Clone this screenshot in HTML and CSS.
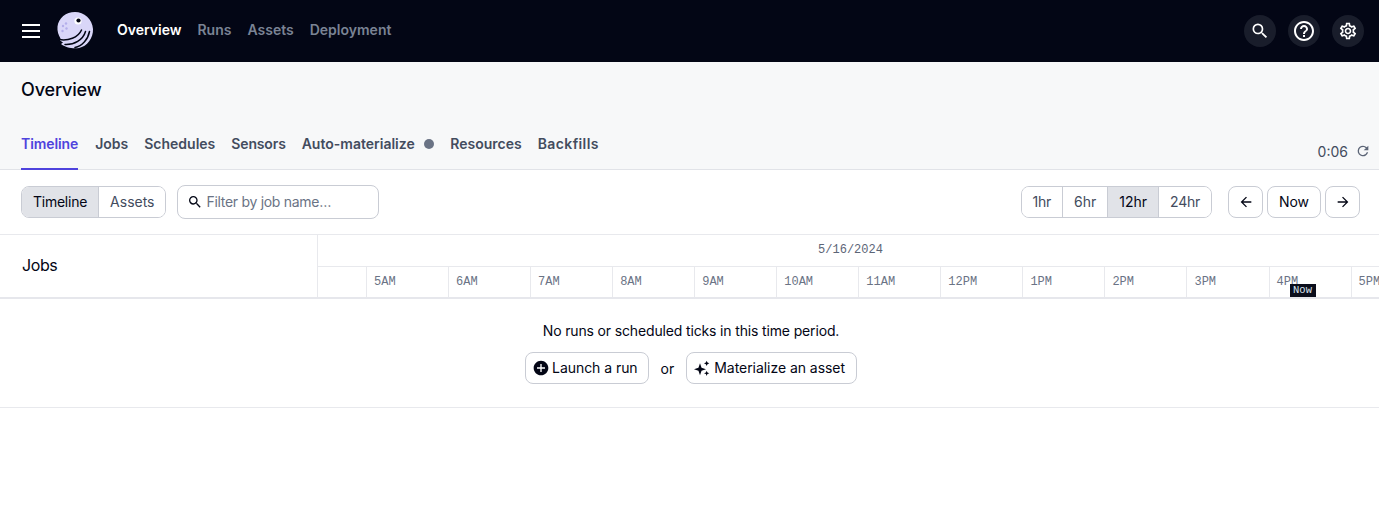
FILE: index.html
```html
<!DOCTYPE html>
<html lang="en">
<head>
    <meta charset="UTF-8">
    <meta name="viewport" content="width=device-width, initial-scale=1.0">
    <title>Overview</title>
    <link rel="stylesheet" href="styles.css">
</head>
<body>
    <header class="topnav">
        <svg class="menu-icon" width="18" height="14" viewBox="0 0 18 14"><path d="M0 1h18M0 7h18M0 13h18" stroke="#fff" stroke-width="2"/></svg>
        <svg class="logo" width="38" height="38" viewBox="0 0 38 38">
            <path d="M19 1C28 1 36.500 8 37 18C37.500 27 31 35.500 23 37C17 38 9 36.500 5 33L7 31.500L4 29.500L4.500 27.500C2.500 24 1 20 1.500 15.500C2.500 7 10 1 19 1Z" fill="#d9d6f8"/>
            <path d="M3 28.500C12 30 22 27 25.500 19M9 33.500C18 34 27 29 29.500 20.500M19 36.500C26 35 32 28.500 33.500 20.500" fill="none" stroke="#030615" stroke-width="1.500" stroke-linecap="round"/>
            <circle cx="22" cy="10" r="3.600" fill="#fff"/>
            <circle cx="22.500" cy="9.500" r="2.100" fill="#030615"/>
            <circle cx="7" cy="15" r="1.200" fill="#b3aeea"/>
            <circle cx="10.500" cy="17.500" r="1.200" fill="#b3aeea"/>
            <circle cx="6.500" cy="20" r="1.200" fill="#b3aeea"/>
            <circle cx="10" cy="12.500" r="1.200" fill="#b3aeea"/>
        </svg>
        <nav class="topnav-links">
            <a class="topnav-link active">Overview</a>
            <a class="topnav-link">Runs</a>
            <a class="topnav-link">Assets</a>
            <a class="topnav-link">Deployment</a>
        </nav>
        <div class="topnav-right">
            <div class="round-btn">
                <svg width="20" height="20" viewBox="0 0 24 24" fill="#fff"><path d="M15.500 14h-.79l-.28-.27A6.470 6.470 0 0 0 16 9.500 6.500 6.500 0 1 0 9.500 16c1.610 0 3.090-.59 4.230-1.570l.27.28v.79l5 4.990L20.490 19l-4.990-5zm-6 0C7.010 14 5 11.990 5 9.500S7.010 5 9.500 5 14 7.010 14 9.500 11.990 14 9.500 14z"/></svg>
            </div>
            <div class="round-btn">
                <svg width="24" height="24" viewBox="0 0 24 24" fill="#fff"><path d="M11 18h2v-2h-2v2zm1-16C6.480 2 2 6.480 2 12s4.480 10 10 10 10-4.480 10-10S17.520 2 12 2zm0 18c-4.410 0-8-3.590-8-8s3.590-8 8-8 8 3.590 8 8-3.590 8-8 8zm0-14c-2.210 0-4 1.790-4 4h2c0-1.100.9-2 2-2s2 .9 2 2c0 2-3 1.750-3 5h2c0-2.250 3-2.500 3-5 0-2.210-1.790-4-4-4z"/></svg>
            </div>
            <div class="round-btn">
                <svg width="20" height="20" viewBox="0 0 24 24" fill="#fff"><path d="M19.430 12.980c.04-.32.070-.64.070-.98 0-.34-.03-.66-.07-.98l2.110-1.650c.19-.15.240-.42.120-.64l-2-3.460c-.09-.16-.26-.25-.44-.25-.06 0-.12.010-.17.030l-2.490 1c-.52-.4-1.080-.73-1.690-.98l-.38-2.650C14.460 2.180 14.250 2 14 2h-4c-.25 0-.46.180-.49.420l-.38 2.650c-.61.250-1.170.590-1.690.980l-2.490-1c-.06-.02-.12-.03-.18-.03-.17 0-.34.090-.43.250l-2 3.460c-.13.220-.07.490.12.640l2.110 1.650c-.04.320-.07.650-.07.980 0 .33.030.66.070.98l-2.110 1.650c-.19.150-.24.420-.12.640l2 3.460c.09.160.26.250.44.250.06 0 .12-.01.170-.03l2.490-1c.52.400 1.080.730 1.690.980l.38 2.650c.03.240.24.420.49.420h4c.25 0 .46-.18.490-.42l.38-2.650c.61-.25 1.170-.59 1.690-.98l2.490 1c.06.020.12.030.18.030.17 0 .34-.09.43-.25l2-3.460c.12-.22.070-.49-.12-.64l-2.110-1.650zm-1.980-1.710c.04.310.05.520.05.730 0 .21-.02.430-.05.730l-.14 1.130.89.700 1.080.840-.7 1.210-1.270-.51-1.040-.42-.9.680c-.43.320-.84.560-1.250.730l-1.060.430-.16 1.130-.2 1.350h-1.400l-.19-1.350-.16-1.130-1.060-.43c-.43-.18-.83-.41-1.230-.71l-.91-.7-1.060.43-1.270.51-.7-1.210 1.080-.84.890-.7-.14-1.130c-.03-.31-.05-.54-.05-.74s.02-.43.050-.73l.14-1.130-.89-.7-1.080-.84.7-1.210 1.270.51 1.040.42.9-.68c.43-.32.840-.56 1.250-.73l1.060-.43.160-1.130.2-1.350h1.390l.19 1.350.16 1.130 1.060.43c.43.180.83.410 1.230.71l.91.700 1.060-.43 1.270-.51.7 1.210-1.070.85-.89.700.14 1.130zM12 8c-2.210 0-4 1.790-4 4s1.790 4 4 4 4-1.790 4-4-1.790-4-4-4zm0 6c-1.100 0-2-.9-2-2s.9-2 2-2 2 .9 2 2-.9 2-2 2z"/></svg>
            </div>
        </div>
    </header>

    <section class="page-head">
        <h1 class="page-title">Overview</h1>
        <div class="tabs-row">
            <div class="tabs">
                <a class="tab active">Timeline</a>
                <a class="tab">Jobs</a>
                <a class="tab">Schedules</a>
                <a class="tab tab-tight">Sensors</a>
                <a class="tab">Auto-materialize <span class="tab-dot"></span></a>
                <a class="tab">Resources</a>
                <a class="tab tab-wide">Backfills</a>
            </div>
            <div class="refresh">
                <span>0:06</span>
                <svg width="16" height="16" viewBox="0 0 24 24" fill="#5c6577"><path d="M17.650 6.350A7.960 7.960 0 0 0 12 4a8 8 0 1 0 7.730 10h-2.080A6 6 0 1 1 12 6c1.660 0 3.140.69 4.220 1.780L13 11h7V4l-2.350 2.350z"/></svg>
            </div>
        </div>
    </section>

    <section class="toolbar">
        <div class="toolbar-left">
            <div class="btn-group">
                <button class="seg selected seg-tight">Timeline</button>
                <button class="seg seg-assets">Assets</button>
            </div>
            <div class="filter">
                <svg width="16" height="16" viewBox="0 0 24 24" fill="#030615"><path d="M15.500 14h-.79l-.28-.27A6.470 6.470 0 0 0 16 9.500 6.500 6.500 0 1 0 9.500 16c1.610 0 3.090-.59 4.230-1.570l.27.28v.79l5 4.990L20.490 19l-4.990-5zm-6 0C7.010 14 5 11.990 5 9.500S7.010 5 9.500 5 14 7.010 14 9.500 11.990 14 9.500 14z"/></svg>
                <span>Filter by job name…</span>
            </div>
        </div>
        <div class="toolbar-right">
            <div class="btn-group">
                <button class="seg seg-tight">1hr</button>
                <button class="seg">6hr</button>
                <button class="seg selected">12hr</button>
                <button class="seg seg-tight">24hr</button>
            </div>
            <div class="pager">
                <button class="btn icon-btn"><svg width="16" height="16" viewBox="0 0 24 24" fill="#030615"><path d="M20 11H7.830l5.590-5.590L12 4l-8 8 8 8 1.410-1.410L7.830 13H20v-2z"/></svg></button>
                <button class="btn now-btn">Now</button>
                <button class="btn icon-btn"><svg width="16" height="16" viewBox="0 0 24 24" fill="#030615"><path d="M12 4l-1.410 1.410L16.170 11H4v2h12.170l-5.580 5.590L12 20l8-8z"/></svg></button>
            </div>
        </div>
    </section>

    <section class="timeline-head">
        <div class="jobs-col">Jobs</div>
        <div class="time-col">
            <div class="date-row">5/16/2024</div>
            <div class="ticks">
                <div class="tick-spacer"></div>
                <div class="tick">5AM</div>
                <div class="tick">6AM</div>
                <div class="tick">7AM</div>
                <div class="tick">8AM</div>
                <div class="tick">9AM</div>
                <div class="tick">10AM</div>
                <div class="tick">11AM</div>
                <div class="tick">12PM</div>
                <div class="tick">1PM</div>
                <div class="tick">2PM</div>
                <div class="tick">3PM</div>
                <div class="tick">4PM<span class="now-tag">Now</span></div>
                <div class="tick">5PM</div>
            </div>
        </div>
    </section>

    <section class="empty">
        <p class="empty-text">No runs or scheduled ticks in this time period.</p>
        <div class="empty-actions">
            <button class="btn action-btn launch-btn">
                <svg width="16" height="16" viewBox="0 0 24 24" fill="#030615"><path d="M12 1C5.930 1 1 5.930 1 12s4.930 11 11 11 11-4.930 11-11S18.070 1 12 1zm6 12h-5v5h-2v-5H6v-2h5V6h2v5h5v2z"/></svg>
                Launch a run
            </button>
            <span>or</span>
            <button class="btn action-btn">
                <svg width="16" height="16" viewBox="0 0 24 24" fill="#030615"><path d="M9 5l2.300 6.700L18 14l-6.700 2.300L9 23l-2.300-6.700L0 14l6.700-2.300zM19 1l1.200 2.800L23 5l-2.800 1.200L19 9l-1.200-2.800L15 5l2.800-1.200zM19 16l1.100 2.900L23 20l-2.900 1.100L19 24l-1.100-2.900L15 20l2.900-1.100z"/></svg>
                Materialize an asset
            </button>
        </div>
    </section>
</body>
</html>
```

FILE: styles.css
```css
* {
    box-sizing: border-box;
}
body {
    margin: 0;
    font-family: Inter, "Noto Sans", sans-serif;
    font-size: 14px;
    color: #030615;
    background-color: #fff;
}
button {
    font-family: inherit;
    font-size: 14px;
    color: inherit;
    cursor: pointer;
}

/* top bar */
.topnav {
    height: 62px;
    background-color: #030615;
    display: flex;
    align-items: center;
    padding: 0 15px 0 22px;
}
.menu-icon {
    margin-right: 16px;
}
.logo {
    margin: -2px 23px 0 0;
}
.topnav-links {
    display: flex;
    gap: 16px;
    padding-bottom: 4px;
}
.topnav-link {
    font-size: 14px;
    font-weight: 600;
    color: #7a8394;
}
.topnav-link.active {
    color: #fff;
}
.topnav-right {
    margin-left: auto;
    display: flex;
    gap: 12px;
}
.round-btn {
    width: 32px;
    height: 32px;
    border-radius: 50%;
    background-color: #191d2b;
    display: flex;
    align-items: center;
    justify-content: center;
}

/* page header and tabs */
.page-head {
    height: 108px;
    background-color: #f7f8f9;
    border-bottom: 1px solid #e1e3e8;
    padding: 0 8px 0 21px;
    display: flex;
    flex-direction: column;
    justify-content: space-between;
}
.page-title {
    margin: 16px 0 0;
    font-size: 18px;
    line-height: 24px;
    font-weight: 500;
    letter-spacing: -0.15px;
}
.tabs-row {
    display: flex;
    justify-content: space-between;
    align-items: flex-end;
}
.tabs {
    display: flex;
    gap: 16px;
}
.tab {
    height: 39px;
    padding-top: 3px;
    margin-bottom: -1px;
    font-size: 14px;
    line-height: 20px;
    font-weight: 600;
    color: #434c5e;
    border-bottom: 2px solid transparent;
    display: flex;
    align-items: flex-start;
    white-space: pre;
}
.tab.active {
    color: #4f43dd;
    border-bottom-color: #4f43dd;
    margin-right: 1px;
    letter-spacing: -0.1px;
}
.tab-tight {
    letter-spacing: -0.15px;
}
.tab-wide {
    letter-spacing: 0.4px;
}
.tab-dot {
    width: 10px;
    height: 10px;
    margin: 5px 0 0 6px;
    border-radius: 50%;
    background-color: #6a7385;
}
.refresh {
    display: flex;
    align-items: center;
    gap: 7px;
    height: 36px;
    font-size: 14px;
    color: #434c5e;
}

/* toolbar */
.toolbar {
    height: 64px;
    padding: 15px 21px 0;
    display: flex;
    justify-content: space-between;
}
.toolbar-left, .toolbar-right, .pager {
    display: flex;
    align-items: flex-start;
}
.toolbar-left {
    gap: 11px;
}
.toolbar-right {
    gap: 16px;
    margin-right: -2px;
}
.pager {
    gap: 4px;
}
.btn-group {
    display: flex;
    height: 32px;
    margin-top: 1px;
    border: 1px solid #c9ccd4;
    border-radius: 8px;
    overflow: hidden;
}
.seg {
    border: none;
    border-right: 1px solid #c9ccd4;
    background-color: #fff;
    padding: 0 11px 2px;
    color: #434c5e;
}
.seg:last-child {
    border-right: none;
}
.seg.selected {
    background-color: #e1e3e8;
    color: #030615;
}
.seg-tight {
    letter-spacing: -0.25px;
}
.seg-assets {
    padding-right: 10px;
}
.filter {
    width: 202px;
    height: 34px;
    border: 1px solid #c9ccd4;
    border-radius: 8px;
    display: flex;
    align-items: center;
    gap: 4px;
    padding: 0 0 1px 9px;
    color: #6a7385;
    letter-spacing: -0.3px;
}
.btn {
    height: 32px;
    margin-top: 1px;
    border: 1px solid #c9ccd4;
    border-radius: 8px;
    background-color: #fff;
    display: flex;
    align-items: center;
    justify-content: center;
}
.icon-btn {
    width: 35px;
    padding: 0;
}
.now-btn {
    width: 54px;
    padding: 0 0 2px;
}

/* timeline */
.timeline-head {
    height: 65px;
    display: flex;
    border-top: 1px solid #e8e9ed;
    border-bottom: 2px solid #e6e7ec;
}
.jobs-col {
    width: 318px;
    flex: none;
    padding: 0 0 2px 22px;
    font-size: 16px;
    letter-spacing: -0.4px;
    display: flex;
    align-items: center;
    border-right: 1px solid #e8e9ed;
}
.time-col {
    flex: 1;
    min-width: 0;
    overflow: hidden;
}
.date-row {
    height: 32px;
    padding: 0 0 0 4px;
    border-bottom: 1px solid #e8e9ed;
    font-family: "Liberation Mono", monospace;
    font-size: 12px;
    line-height: 30px;
    text-align: center;
    color: #5c6577;
}
.ticks {
    display: flex;
    height: 31px;
}
.tick-spacer {
    flex: 0 0 48px;
}
.tick {
    flex: 0 0 82.05px;
    position: relative;
    border-left: 1px solid #e8e9ed;
    padding: 7px 0 0 7px;
    font-family: "Liberation Mono", monospace;
    font-size: 12px;
    line-height: 16px;
    color: #6a7385;
}
.now-tag {
    position: absolute;
    left: 20px;
    top: 17px;
    width: 26px;
    height: 14px;
    background-color: #0b0e1c;
    color: #dbe6f2;
    font-size: 10.500px;
    line-height: 13px;
    text-align: center;
}

/* empty state */
.empty {
    height: 109px;
    border-bottom: 1px solid #e8e9ed;
    display: flex;
    flex-direction: column;
    align-items: center;
    padding: 22px 0 0 3px;
}
.empty-text {
    margin: 0;
    line-height: 20px;
    font-size: 14px;
    letter-spacing: -0.15px;
}
.empty-actions {
    display: flex;
    align-items: center;
    gap: 12px;
    margin-top: 11px;
}
.action-btn {
    gap: 4px;
    padding: 0 11px 1px 7px;
    margin-top: 0;
    letter-spacing: -0.05px;
}
.launch-btn {
    gap: 3px;
    padding-right: 10px;
}
```
